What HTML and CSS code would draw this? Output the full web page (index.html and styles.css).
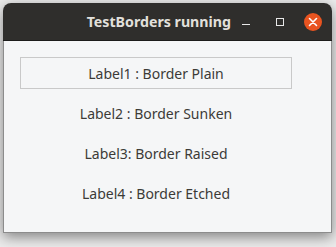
FILE: index.html
```html
<!DOCTYPE html>
<html lang="en">
<head>
  <meta charset="UTF-8" />
  <title>TestBorders running</title>
  <link rel="stylesheet" href="styles.css">
</head>
<body>

  <div class="window">
    <!-- Title bar -->
    <div class="titlebar">
      <span class="title">TestBorders running</span>
      <div class="controls">
        <span class="btn-min"></span>
        <span class="btn-max"></span>
        <span class="btn-close">
          <svg width="18" height="18" viewBox="0 0 18 18">
            <path d="M5.5 5.5 L12.5 12.5 M12.5 5.5 L5.5 12.5" stroke="#fff" stroke-width="1.6" stroke-linecap="round"/>
          </svg>
        </span>
      </div>
    </div>

    <!-- Labels -->
    <div class="content">
      <div class="label plain">Label1 : Border Plain</div>
      <div class="label">Label2 : Border Sunken</div>
      <div class="label">Label3: Border Raised</div>
      <div class="label">Label4 : Border Etched</div>
    </div>
  </div>

</body>
</html>
```
FILE: styles.css
```css
body {
  margin: 0;
  width: 336px;
  height: 247px;
  overflow: hidden;
  background: #ececec;
  font-family: "Noto Sans", sans-serif;
}

.window {
  margin: 3px 0 0 3px;
  width: 329px;
  border-radius: 8px 8px 0 0;
  box-shadow: 0 4px 14px rgba(0, 0, 0, 0.45);
}

.titlebar {
  height: 37px;
  background: #2f2e2c;
  border-radius: 8px 8px 0 0;
  display: flex;
  align-items: center;
  justify-content: flex-end;
  border-bottom: 1px solid #1c1c1b;
}

.title {
  color: #e2e0dc;
  font-weight: bold;
  font-size: 14.2px;
  margin-right: 11px;
}

.controls {
  display: flex;
  align-items: center;
}

.btn-min {
  width: 8px;
  height: 1.5px;
  background: #e8e8e8;
  margin: 6px 26px 0 0;
}

.btn-max {
  width: 6px;
  height: 6px;
  border: 1px solid #e8e8e8;
  margin-right: 20px;
}

.btn-close {
  width: 18px;
  height: 18px;
  border-radius: 50%;
  background: #e95420;
  margin-right: 10px;
  display: flex;
}

.content {
  height: 192px;
  background: #f5f6f7;
  border: 1px solid #8c8c8c;
  border-top: none;
  box-sizing: border-box;
  padding: 16px 0 0 16px;
  display: flex;
  flex-direction: column;
  gap: 8px;
}

.label {
  width: 272px;
  height: 32px;
  box-sizing: border-box;
  display: flex;
  align-items: center;
  justify-content: center;
  color: #3c3b37;
  font-size: 14px;
}

.plain {
  border: 1px solid #c9c9c9;
}
```
